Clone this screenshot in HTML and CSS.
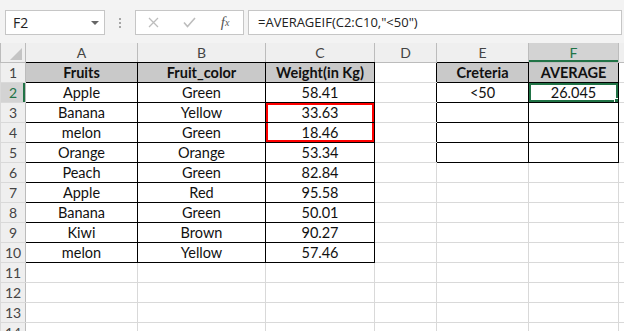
FILE: index.html
```html
<!DOCTYPE html>
<html lang="en">
<head>
    <meta charset="UTF-8">
    <title>AVERAGEIF</title>
    <link rel="stylesheet" href="styles.css">
</head>
<body>
    <!-- Name box and formula bar -->
    <div class="toolbar">
        <div class="namebox"><span>F2</span><span class="caret"></span></div>
        <div class="grip"><i></i><i></i><i></i></div>
        <div class="fxbox">
            <span>
                <svg width="11" height="11" viewBox="0 0 11 11"><path d="M1 1L10 10M10 1L1 10" stroke="#bdbdbd" stroke-width="1.3" fill="none"/></svg>
            </span>
            <span>
                <svg width="13" height="11" viewBox="0 0 13 11"><path d="M1 5.5L4.5 9.5L12 1" stroke="#bdbdbd" stroke-width="1.6" fill="none"/></svg>
            </span>
            <span class="fx"><i>f</i><sub>x</sub></span>
        </div>
        <div class="formula">=AVERAGEIF(C2:C10,"&lt;50")</div>
    </div>

    <!-- Sheet grid -->
    <table class="sheet">
        <colgroup>
            <col style="width:25px">
            <col style="width:112px">
            <col style="width:128px">
            <col style="width:109px">
            <col style="width:62px">
            <col style="width:92px">
            <col style="width:90px">
            <col>
        </colgroup>
        <thead>
            <tr>
                <th class="corner"><svg width="24" height="19" viewBox="0 0 24 19"><polygon points="21,5 21,17 9,17" fill="#c4c4c4"/></svg></th>
                <th class="k">A</th>
                <th class="k">B</th>
                <th class="k">C</th>
                <th>D</th>
                <th class="k">E</th>
                <th class="sel col-sel">F</th>
                <th></th>
            </tr>
        </thead>
        <tbody>
            <tr>
                <th>1</th>
                <td class="d h">Fruits</td>
                <td class="d h">Fruit_color</td>
                <td class="d h">Weight(in Kg)</td>
                <td class="r"></td>
                <td class="d h">Creteria</td>
                <td class="d h">AVERAGE</td>
                <td></td>
            </tr>
            <tr>
                <th class="sel row-sel">2</th>
                <td class="d">Apple</td>
                <td class="d">Green</td>
                <td class="d">58.41</td>
                <td class="r"></td>
                <td class="d">&lt;50</td>
                <td class="d active">26.045</td>
                <td></td>
            </tr>
            <tr>
                <th>3</th>
                <td class="d">Banana</td>
                <td class="d">Yellow</td>
                <td class="d red-top">33.63</td>
                <td class="r"></td>
                <td class="d"></td>
                <td class="d"></td>
                <td></td>
            </tr>
            <tr>
                <th>4</th>
                <td class="d">melon</td>
                <td class="d">Green</td>
                <td class="d red-bot">18.46</td>
                <td class="r"></td>
                <td class="d"></td>
                <td class="d"></td>
                <td></td>
            </tr>
            <tr>
                <th>5</th>
                <td class="d">Orange</td>
                <td class="d">Orange</td>
                <td class="d">53.34</td>
                <td class="r"></td>
                <td class="d"></td>
                <td class="d"></td>
                <td></td>
            </tr>
            <tr>
                <th>6</th>
                <td class="d">Peach</td>
                <td class="d">Green</td>
                <td class="d">82.84</td>
                <td></td><td></td><td></td><td></td>
            </tr>
            <tr>
                <th>7</th>
                <td class="d">Apple</td>
                <td class="d">Red</td>
                <td class="d">95.58</td>
                <td></td><td></td><td></td><td></td>
            </tr>
            <tr>
                <th>8</th>
                <td class="d">Banana</td>
                <td class="d">Green</td>
                <td class="d">50.01</td>
                <td></td><td></td><td></td><td></td>
            </tr>
            <tr>
                <th>9</th>
                <td class="d">Kiwi</td>
                <td class="d">Brown</td>
                <td class="d">90.27</td>
                <td></td><td></td><td></td><td></td>
            </tr>
            <tr>
                <th>10</th>
                <td class="d">melon</td>
                <td class="d">Yellow</td>
                <td class="d">57.46</td>
                <td></td><td></td><td></td><td></td>
            </tr>
            <tr><th>11</th><td></td><td></td><td></td><td></td><td></td><td></td><td></td></tr>
            <tr><th>12</th><td></td><td></td><td></td><td></td><td></td><td></td><td></td></tr>
            <tr><th>13</th><td></td><td></td><td></td><td></td><td></td><td></td><td></td></tr>
            <tr><th>14</th><td></td><td></td><td></td><td></td><td></td><td></td><td></td></tr>
        </tbody>
    </table>
</body>
</html>
```

FILE: styles.css
```css
body {
    margin: 0;
    width: 624px;
    height: 331px;
    overflow: hidden;
    background: #fff;
    font-family: Lato, "Open Sans", sans-serif;
}

/* formula bar */
.toolbar {
    display: flex;
    align-items: flex-start;
    height: 43px;
    box-sizing: border-box;
    padding-top: 10px;
    background: #f3f3f3;
}
.namebox {
    box-sizing: border-box;
    width: 100px;
    height: 25px;
    margin-left: 5px;
    padding: 0 5px 0 7px;
    border: 1px solid #c6c6c6;
    background: #fff;
    display: flex;
    align-items: center;
    justify-content: space-between;
    font: 14px "Open Sans", sans-serif;
    color: #222;
}
.caret {
    width: 0;
    height: 0;
    border-left: 4px solid transparent;
    border-right: 4px solid transparent;
    border-top: 4px solid #666;
}
.grip {
    width: 30px;
    height: 25px;
    display: flex;
    flex-direction: column;
    align-items: center;
    justify-content: center;
    gap: 2px;
}
.grip i {
    width: 2px;
    height: 2px;
    background: #a6a6a6;
}
.fxbox {
    box-sizing: border-box;
    width: 109px;
    height: 25px;
    border: 1px solid #c6c6c6;
    background: #fff;
    display: flex;
    align-items: center;
}
.fxbox span {
    width: 36px;
    display: flex;
    justify-content: center;
    align-items: center;
}
.fx {
    font-family: "Liberation Serif", serif;
    font-size: 15px;
    color: #555;
}
.fx sub {
    font-size: 10px;
    font-style: italic;
    vertical-align: -2px;
}
.formula {
    flex: 1;
    box-sizing: border-box;
    height: 25px;
    margin: 0 2px 0 4px;
    padding-left: 9px;
    border: 1px solid #c6c6c6;
    background: #fff;
    font: 13px "Open Sans", sans-serif;
    line-height: 23px;
    color: #222;
}

/* grid */
.sheet {
    border-collapse: collapse;
    table-layout: fixed;
    width: 640px;
    font-size: 14.5px;
    color: #111;
}
.sheet td,
.sheet th {
    height: 19px;
    padding: 0;
    border: 1px solid #d9d9d9;
    text-align: center;
    white-space: nowrap;
    overflow: hidden;
    line-height: 18px;
}
.sheet th {
    background: #efefef;
    color: #444;
    font-weight: normal;
    font-size: 14px;
}
.sheet thead th {
    border-top: none;
    border-left-color: #bcbcbc;
    border-right-color: #bcbcbc;
    border-bottom-color: #bcbcbc;
}
.sheet tbody th {
    border-right-color: #bcbcbc;
}
.sheet th.corner {
    text-align: right;
    vertical-align: bottom;
}
.corner svg {
    display: block;
}
.sheet th.sel {
    background: #d3d3d3;
    color: #217346;
}
.col-sel {
    box-shadow: inset 0 -2px 0 #217346;
}
.row-sel {
    box-shadow: inset -2px 0 0 #217346;
}
.sheet th.k,
.sheet td.d {
    border-color: #000;
}
.sheet th.k {
    border-left-color: #bcbcbc;
    border-right-color: #bcbcbc;
}
.sheet td.r {
    border-right-color: #000;
}
.h {
    background: #c9c9c9;
    font-weight: bold;
}
.active {
    position: relative;
    box-shadow: inset 0 0 0 2px #217346;
}
.active::after {
    content: "";
    position: absolute;
    right: -3px;
    bottom: -3px;
    width: 5px;
    height: 5px;
    background: #217346;
    border: 1px solid #fff;
}
.red-top {
    box-shadow: inset 2px 2px 0 #f00, inset -2px 0 0 #f00;
}
.red-bot {
    box-shadow: inset 2px -2px 0 #f00, inset -2px 0 0 #f00;
}
```
